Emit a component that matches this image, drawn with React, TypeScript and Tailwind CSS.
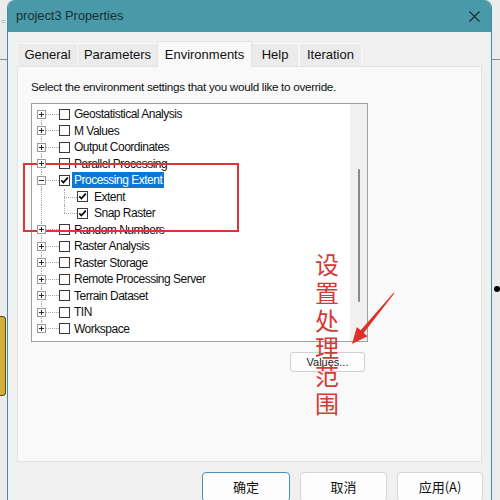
import React from "react";

const FONT = { fontFamily: '"Liberation Sans", Arial, "Noto Sans CJK SC", sans-serif' };

const topItems = [
  "Geostatistical Analysis",
  "M Values",
  "Output Coordinates",
  "Parallel Processing",
];
const bottomItems = [
  "Random Numbers",
  "Raster Analysis",
  "Raster Storage",
  "Remote Processing Server",
  "Terrain Dataset",
  "TIN",
  "Workspace",
];

function PlusBox({ minus }: { minus?: boolean }) {
  return (
    <svg width="9" height="9" viewBox="0 0 9 9" className="relative z-10 block">
      <rect x="0.5" y="0.5" width="8" height="8" fill="#fff" stroke="#9a9a9a" />
      <line x1="2" y1="4.5" x2="7" y2="4.5" stroke="#2a2a2a" />
      {!minus && <line x1="4.5" y1="2" x2="4.5" y2="7" stroke="#2a2a2a" />}
    </svg>
  );
}

function Check({ checked }: { checked?: boolean }) {
  return (
    <svg width="11" height="11" viewBox="0 0 11 11" className="block shrink-0">
      <rect x="0.5" y="0.5" width="10" height="10" fill="#fff" stroke="#3a3a3a" />
      {checked && (
        <path d="M2.3 5.4 L4.4 7.6 L8.8 2.6" fill="none" stroke="#000" strokeWidth="1.7" />
      )}
    </svg>
  );
}

function RootCell({ first, last, box, minus }: { first?: boolean; last?: boolean; box?: boolean; minus?: boolean }) {
  return (
    <div className="relative w-[9px] h-full flex items-center shrink-0">
      <div
        className={`absolute left-[4px] w-0 border-l border-dotted border-[#a8a8a8] ${first ? "top-1/2" : "top-0"} ${last ? "bottom-1/2" : "bottom-0"}`}
      />
      {box && <PlusBox minus={minus} />}
    </div>
  );
}

function Row({ label, first, last, minus, checked, selected }: { label: string; first?: boolean; last?: boolean; minus?: boolean; checked?: boolean; selected?: boolean }) {
  return (
    <div className="h-[16.5px] flex items-center pl-[5px]">
      <RootCell first={first} last={last} box minus={minus} />
      <div className="w-[13px] h-0 border-t border-dotted border-[#a8a8a8]" />
      <Check checked={checked} />
      <div
        className={`ml-[2px] px-[2px] h-[16px] flex items-center whitespace-nowrap ${selected ? "bg-[#0a78d4] text-white" : "text-[#111]"}`}
      >
        {label}
      </div>
    </div>
  );
}

function ChildRow({ label, last }: { label: string; last?: boolean }) {
  return (
    <div className="h-[16.5px] flex items-center pl-[5px]">
      <RootCell />
      <div className="w-[18px] shrink-0" />
      <div className="relative w-[13px] h-full shrink-0">
        <div className={`absolute left-0 top-0 w-0 border-l border-dotted border-[#a8a8a8] ${last ? "bottom-1/2" : "bottom-0"}`} />
        <div className="absolute left-0 right-0 top-1/2 h-0 border-t border-dotted border-[#a8a8a8]" />
      </div>
      <Check checked />
      <div className="ml-[6px] whitespace-nowrap text-[#111]">{label}</div>
    </div>
  );
}

export default function App() {
  return (
    <div className="relative w-[500px] h-[500px] overflow-hidden bg-[#ececec] flex" style={FONT}>
      {/* left strip (background app) */}
      <div className="w-[7px] shrink-0 flex flex-col">
        <div className="h-[60px] border-b border-[#8c8c8c] flex items-center">
          <span className="text-[8px] text-[#999] ml-[1px] mt-[-16px]">=</span>
        </div>
        <div className="h-[256px]" />
        <div className="w-[6px] h-[80px] bg-[#d4ae38] border border-[#5a4a18] border-l-0 rounded-r-[4px]" />
      </div>

      {/* dialog window */}
      <div className="w-[485px] shrink-0 flex flex-col rounded-t-[8px] overflow-hidden border-x border-[#3f8f9c] bg-[#f0f0f0]">
        <div className="h-[32px] shrink-0 bg-[#4a99a8] flex items-center justify-between pl-[8px] pr-[11px]">
          <span className="text-[12.8px] text-[#15303a]">project3 Properties</span>
          <svg width="11" height="11" viewBox="0 0 11 11">
            <path d="M0.5 0.5 L10.5 10.5 M10.5 0.5 L0.5 10.5" stroke="#1a2a30" strokeWidth="1.1" />
          </svg>
        </div>

        <div className="flex flex-col pt-[9px]">
          {/* tabs */}
          <div className="h-[25px] flex items-end pl-[9px] text-[13px] text-[#111]">
            <div className="w-[60px] h-[23px] bg-[#ebebeb] border-t border-l border-[#f7f7f7] flex items-center justify-center">General</div>
            <div className="w-[80px] h-[23px] bg-[#ebebeb] border-t border-l border-[#f7f7f7] flex items-center justify-center">Parameters</div>
            <div className="relative z-10 w-[95px] h-[26px] -mb-px bg-[#f9f9f9] border-t border-x border-[#e4e4e4] flex items-center justify-center">Environments</div>
            <div className="w-[47px] h-[23px] bg-[#ebebeb] border-t border-r border-[#f7f7f7] flex items-center justify-center">Help</div>
            <div className="w-[63px] h-[23px] bg-[#ebebeb] border-t border-x border-[#f7f7f7] flex items-center justify-center">Iteration</div>
          </div>

          {/* panel */}
          <div className="mx-[9px] h-[396px] bg-[#f9f9f9] border border-[#e4e4e4] pl-[13px] pt-[13px] flex flex-col">
            <div className="h-[14px] leading-[14px] text-[11.7px] tracking-[-0.3px] text-[#111] whitespace-nowrap">
              Select the environment settings that you would like to override.
            </div>
            <div className="mt-[9px] w-[337px] h-[239px] bg-white border border-[#a0a0a0] flex">
              <div className="flex-1 pt-[2px] text-[12px] tracking-[-0.5px]">
                {topItems.map((t, i) => (
                  <Row key={t} label={t} first={i === 0} />
                ))}
                <Row label="Processing Extent" minus checked selected />
                <ChildRow label="Extent" />
                <ChildRow label="Snap Raster" last />
                {bottomItems.map((t, i) => (
                  <Row key={t} label={t} last={i === bottomItems.length - 1} />
                ))}
              </div>
              <div className="w-[17px] bg-[#f0f0f0] flex justify-center pt-[65px]">
                <div className="w-[2px] h-[133px] bg-[#8a8a8a] rounded-full" />
              </div>
            </div>
            <div className="w-[337px] flex justify-end pr-[3px] mt-[10px]">
              <div className="w-[75px] h-[20px] bg-[#fdfdfd] border border-[#d0d0d0] rounded-[3px] flex items-center justify-center text-[11px] text-[#222]">
                Values...
              </div>
            </div>
          </div>

          {/* bottom buttons */}
          <div className="mt-[10px] flex justify-end gap-[10px] pr-[8px] text-[13px] text-[#111]" style={{ fontFamily: '"Noto Sans CJK SC", "Liberation Sans", sans-serif' }}>
            <div className="w-[88px] h-[30px] bg-[#fdfdfd] border border-[#4d8fb0] rounded-[4px] flex items-center justify-center">确定</div>
            <div className="w-[87px] h-[30px] bg-[#fdfdfd] border border-[#d5d5d5] rounded-[4px] flex items-center justify-center">取消</div>
            <div className="w-[86px] h-[30px] bg-[#fdfdfd] border border-[#d5d5d5] rounded-[4px] flex items-center justify-center">应用(A)</div>
          </div>
        </div>
      </div>

      {/* right strip */}
      <div className="w-[8px] shrink-0 flex flex-col">
        <div className="h-[60px] border-b border-[#8c8c8c]" />
        <div className="h-[226px]" />
        <div className="ml-[2px] w-[6px] h-[6px] rounded-full bg-black" />
      </div>

      {/* annotation: red rectangle */}
      <div className="absolute left-[23px] top-[163px] w-[216px] h-[69px] border-2 border-[#d8373a]" />

      {/* annotation: red vertical text */}
      <div
        className="absolute left-[315px] top-[250px] flex flex-col text-[24px] leading-[27.8px] text-[#d63a35]"
        style={{ fontFamily: '"Noto Sans CJK SC", sans-serif' }}
      >
        <span>设</span>
        <span>置</span>
        <span>处</span>
        <span>理</span>
        <span>范</span>
        <span>围</span>
      </div>

      {/* annotation: red arrow */}
      <svg className="absolute left-0 top-0" width="500" height="500" viewBox="0 0 500 500">
        <polygon
          points="394.4,293.3 363.7,332.9 367.6,336.2 352,344 356.8,327.0 360.7,330.3 393.6,292.7"
          fill="#e0302b"
        />
      </svg>
    </div>
  );
}
